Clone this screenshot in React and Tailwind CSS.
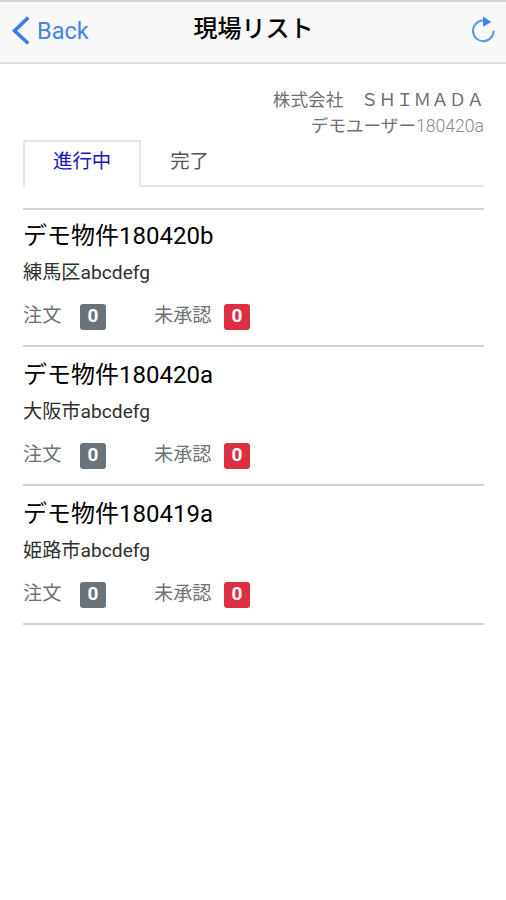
import React, { useState } from 'react';

const SITES = [
  { id: 1, name: 'デモ物件180420b', address: '練馬区abcdefg', orders: 0, pending: 0 },
  { id: 2, name: 'デモ物件180420a', address: '大阪市abcdefg', orders: 0, pending: 0 },
  { id: 3, name: 'デモ物件180419a', address: '姫路市abcdefg', orders: 0, pending: 0 },
];

const TABS = [
  { id: 'active', label: '進行中' },
  { id: 'done', label: '完了' },
];

const Header = () => (
  <header className="grid h-[64px] shrink-0 grid-cols-[1fr_auto_1fr] items-start border-t-2 border-b-2 border-t-[#d2d2d2] border-b-[#dfdfdf] bg-[#f8f8f8] pl-[11px] pr-[10px]">
    <button className="flex items-start text-[#4585e6]">
      <svg className="mt-[14px] h-[29px] w-[19px]" viewBox="0 0 19 29" fill="none" stroke="#3b7de8" strokeWidth="3.6">
        <path d="M17.3 1.5L3.6 14.7L17.3 27.5" />
      </svg>
      <span className="ml-[7px] mt-[11px] text-[23.5px] leading-[36px]">Back</span>
    </button>
    <h1 className="mt-[9px] text-[24px] leading-[36px] font-medium text-black">現場リスト</h1>
    <button className="mt-[14px] justify-self-end">
      <svg className="h-[28px] w-[26px]" viewBox="0 0 26 28" fill="none">
        <path d="M12.8 4.6A10.3 10.3 0 1 0 23.6 14.8" stroke="#5596ee" strokeWidth="2" />
        <path d="M13 0.5V10.8L21.4 6Z" fill="#3b83ee" />
      </svg>
    </button>
  </header>
);

const Badge = ({ value, danger }) => (
  <span
    className={`flex h-[26px] w-[26px] justify-center rounded-[3px] text-[19px] leading-[24px] font-bold text-white ${
      danger ? 'bg-[#dc3042]' : 'bg-[#6b737b]'
    }`}
  >
    {value}
  </span>
);

const SiteItem = ({ site }) => (
  <li className="h-[139px] border-b-2 border-[#d3d3d3] pt-[10px] first:h-[137px] first:pt-[8px]">
    <h2 className="text-[24px] leading-[36px] text-black">{site.name}</h2>
    <p className="mt-[5px] text-[19.2px] leading-[28px] text-[#2f2f2f]">{site.address}</p>
    <div className="mt-[17px] flex text-[19.2px] leading-[24px] text-[#6d7276]">
      <span className="w-[57px]">注文</span>
      <Badge value={site.orders} />
      <span className="ml-[48px] w-[70px]">未承認</span>
      <Badge value={site.pending} danger />
    </div>
  </li>
);

const App = () => {
  const [activeTab, setActiveTab] = useState('active');

  return (
    <div className="flex h-[900px] w-[506px] flex-col overflow-hidden bg-white font-['Roboto','Noto_Sans_CJK_JP',sans-serif]">
      <Header />

      <main className="flex-1 pl-[23px] pr-[22px]">
        {/* Company and user */}
        <div className="h-[76px] pt-[23px] text-right text-[17.6px] leading-[26px] text-[#6c7072]">
          <p>株式会社　ＳＨＩＭＡＤＡ</p>
          <p>
            デモユーザー<span className="font-light text-[#85898b]">180420a</span>
          </p>
        </div>

        {/* Tabs */}
        <nav className="flex h-[47px]">
          {TABS.map((tab) => (
            <button
              key={tab.id}
              onClick={() => setActiveTab(tab.id)}
              className={`text-[19.4px] ${
                tab.id === activeTab
                  ? 'border-2 border-b-0 border-[#e6e6e6] px-[28px] pb-[5px] text-[#1414c0]'
                  : 'border-b-2 border-[#e6e6e6] px-[29px] pb-[1px] text-[#555555]'
              }`}
            >
              {tab.label}
            </button>
          ))}
          <div className="flex-1 border-b-2 border-[#e6e6e6]" />
        </nav>

        {/* Site list */}
        <ul className="mt-[21px] border-t-2 border-[#d3d3d3]">
          {SITES.map((site) => (
            <SiteItem key={site.id} site={site} />
          ))}
        </ul>
      </main>
    </div>
  );
};

export default App;
